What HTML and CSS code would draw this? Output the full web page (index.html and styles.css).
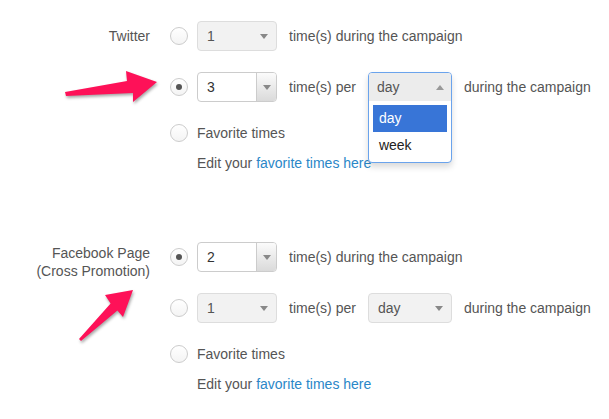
FILE: index.html
```html
<!DOCTYPE html>
<html lang="en">

<head>
    <meta charset="UTF-8" />
    <title>Post frequency</title>
    <link rel="stylesheet" href="styles.css">
</head>

<body>
    <div class="page">
        <!-- Twitter -->
        <div class="network">
            <div class="network-label single">Twitter</div>
            <div class="options">
                <div class="opt-row">
                    <span class="radio"></span>
                    <div class="select disabled"><span>1</span><i class="caret"></i></div>
                    <span class="opt-text">time(s) during the campaign</span>
                </div>
                <div class="opt-row">
                    <span class="radio checked"></span>
                    <div class="spin">
                        <span class="spin-value">3</span>
                        <span class="spin-btn"><i class="caret"></i></span>
                    </div>
                    <span class="opt-text">time(s) per</span>
                    <div class="dropdown">
                        <div class="dropdown-panel">
                            <div class="dropdown-head"><span>day</span><i class="caret up"></i></div>
                            <ul class="dropdown-list">
                                <li class="active">day</li>
                                <li>week</li>
                            </ul>
                        </div>
                    </div>
                    <span class="opt-text">during the campaign</span>
                </div>
                <div class="opt-row fav">
                    <span class="radio"></span>
                    <span class="fav-text">Favorite times</span>
                </div>
                <div class="edit">Edit your <a href="#">favorite times here</a></div>
            </div>
        </div>

        <!-- Facebook -->
        <div class="network">
            <div class="network-label">Facebook Page<br />(Cross Promotion)</div>
            <div class="options">
                <div class="opt-row">
                    <span class="radio checked"></span>
                    <div class="spin">
                        <span class="spin-value">2</span>
                        <span class="spin-btn"><i class="caret"></i></span>
                    </div>
                    <span class="opt-text">time(s) during the campaign</span>
                </div>
                <div class="opt-row">
                    <span class="radio"></span>
                    <div class="select disabled"><span>1</span><i class="caret"></i></div>
                    <span class="opt-text">time(s) per</span>
                    <div class="select disabled wide"><span>day</span><i class="caret"></i></div>
                    <span class="opt-text">during the campaign</span>
                </div>
                <div class="opt-row fav">
                    <span class="radio"></span>
                    <span class="fav-text">Favorite times</span>
                </div>
                <div class="edit">Edit your <a href="#">favorite times here</a></div>
            </div>
        </div>

        <!-- annotation arrows -->
        <svg class="arrows" width="609" height="419" viewBox="0 0 609 419">
            <polygon points="65,92 127,81 126,71 157,82 133,102 133,93 66,96" />
            <polygon points="79,339 110.6,303.4 105,295 133,290 123,317 117.4,310.6 81,341" />
        </svg>
    </div>
</body>

</html>
```

FILE: styles.css
```css
* {
    box-sizing: border-box;
}

body {
    margin: 0;
    background: #fff;
    font-family: "Liberation Sans", Arial, sans-serif;
    font-size: 14px;
    color: #555;
}

.page {
    position: relative;
    width: 609px;
    height: 419px;
    padding-top: 21px;
}

.network {
    display: flex;
    margin-bottom: 69px;
}

.network-label {
    width: 150px;
    text-align: right;
    line-height: 18px;
    padding-top: 2px;
}

.network-label.single {
    padding-top: 6px;
}

.options {
    margin-left: 20px;
}

.opt-row {
    display: flex;
    align-items: center;
    height: 30px;
    margin-bottom: 21px;
}

.opt-row.fav {
    height: 20px;
    margin-top: 1px;
    margin-bottom: 10px;
}

.radio {
    width: 18px;
    height: 18px;
    border: 1px solid #ccc;
    border-radius: 50%;
    background: linear-gradient(#fff, #f4f4f4);
    margin-right: 9px;
    display: flex;
    align-items: center;
    justify-content: center;
}

.radio.checked::after {
    content: "";
    width: 6px;
    height: 6px;
    border-radius: 50%;
    background: #555;
}

.caret {
    width: 0;
    height: 0;
    border-left: 4px solid transparent;
    border-right: 4px solid transparent;
    border-top: 5px solid #888;
}

.caret.up {
    border-top: 0;
    border-bottom: 5px solid #999;
}

.select {
    display: flex;
    align-items: center;
    justify-content: space-between;
    width: 80px;
    height: 30px;
    padding: 0 8px 0 9px;
    border: 1px solid #ddd;
    border-radius: 4px;
    color: #555;
}

.select.disabled {
    background: #f2f2f2;
}

.select.wide {
    width: 84px;
}

.spin {
    display: flex;
    width: 80px;
    height: 30px;
    border: 1px solid #ccc;
    border-radius: 4px;
    background: #fff;
    overflow: hidden;
}

.spin-value {
    flex: 1;
    padding-left: 9px;
    line-height: 28px;
    color: #333;
}

.spin-btn {
    width: 20px;
    border-left: 1px solid #ccc;
    background: linear-gradient(#fbfbfb, #dadada);
    display: flex;
    align-items: center;
    justify-content: center;
}

.opt-text {
    margin: 0 12px;
}

/* open dropdown */
.dropdown {
    position: relative;
    width: 84px;
    height: 30px;
}

.dropdown-panel {
    position: absolute;
    top: 0;
    left: 0;
    width: 84px;
    z-index: 2;
    border: 1px solid #6aa3ec;
    border-radius: 4px;
    background: #fff;
    box-shadow: 0 4px 6px rgba(0, 0, 0, 0.15);
    overflow: hidden;
}

.dropdown-head {
    display: flex;
    align-items: center;
    justify-content: space-between;
    height: 28px;
    padding: 0 7px 0 8px;
    background: #ececec;
    color: #555;
}

.dropdown-list {
    list-style: none;
    margin: 0;
    padding: 4px 4px 3px;
}

.dropdown-list li {
    height: 27px;
    line-height: 27px;
    padding-left: 6px;
    color: #222;
}

.dropdown-list li.active {
    background: #3875d7;
    color: #fff;
}

.fav-text {
    color: #555;
}

.edit {
    margin-left: 27px;
    line-height: 20px;
}

.edit a {
    color: #2a87c8;
    text-decoration: none;
}

.arrows {
    position: absolute;
    top: 0;
    left: 0;
    pointer-events: none;
    z-index: 3;
}

.arrows polygon {
    fill: #fe1158;
    filter: drop-shadow(1px 2px 1.5px rgba(0, 0, 0, 0.35));
}
```
